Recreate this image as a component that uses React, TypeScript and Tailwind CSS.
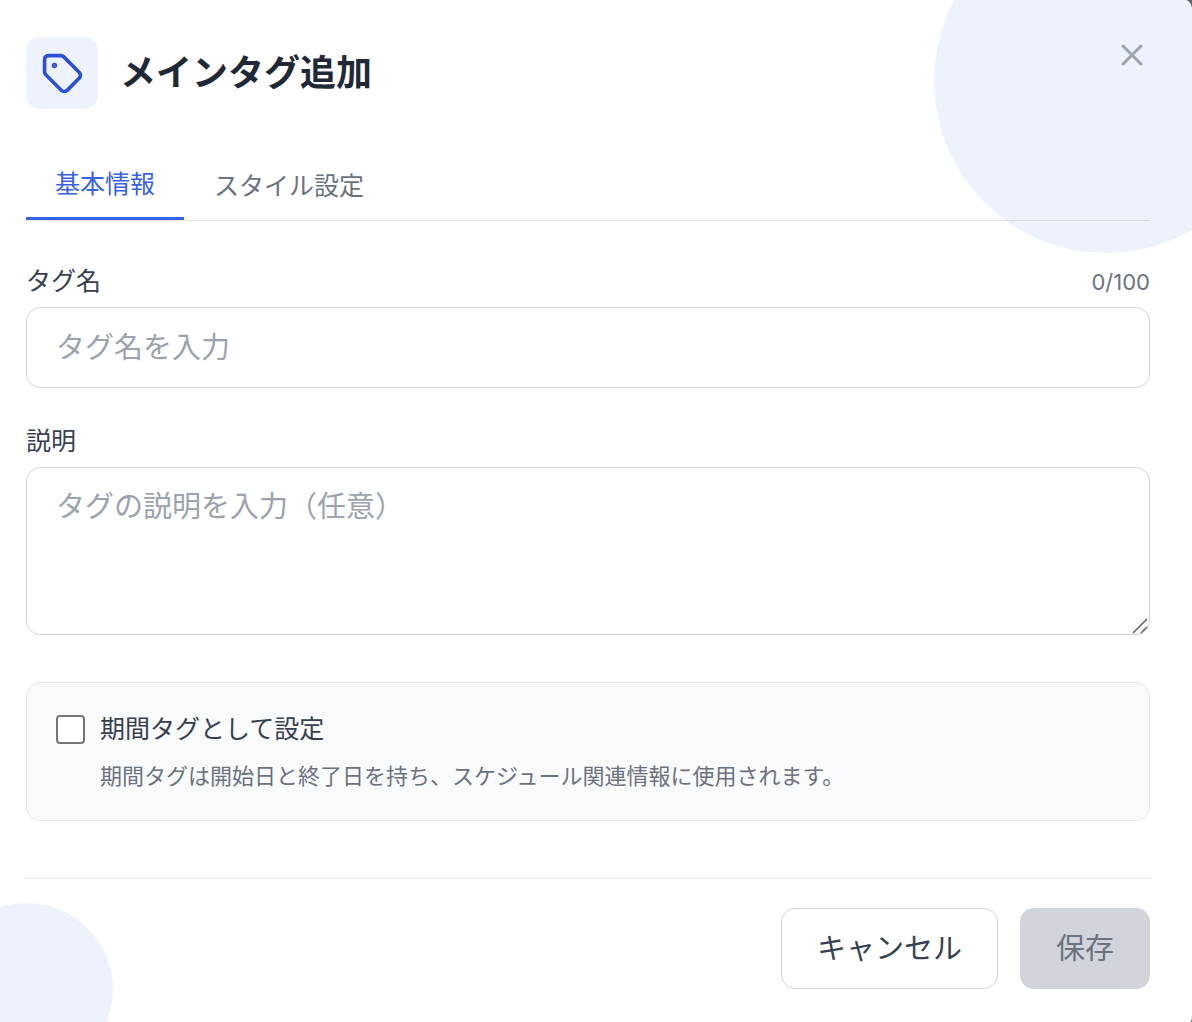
import { Tag, X } from 'lucide-react';
import { useState } from 'react';

export default function App() {
  const [name, setName] = useState('');
  const [description, setDescription] = useState('');

  return (
    <div className="min-h-screen bg-[#666666] font-['Inter','Noto_Sans_CJK_JP',sans-serif]">
      <div
        role="dialog"
        aria-labelledby="dialog-title"
        className="relative min-h-screen overflow-hidden bg-white pt-[37px] pr-[42px] pb-[33px] pl-[26px] [border-top-right-radius:7px_10px] [border-bottom-right-radius:2px_6px]"
      >
        <div className="absolute -top-[91px] -right-[86px] size-[344px] rounded-full bg-[#edf2fd]" />
        <div className="absolute -bottom-[54px] -left-[60px] size-[173px] rounded-full bg-[#edf2fd]" />

        <div className="relative">
          <header className="flex items-start justify-between">
            <div className="flex items-center gap-[22px]">
              <div className="flex size-[72px] items-center justify-center rounded-[14px] bg-[#edf2fd] text-[#2a50d8]">
                <Tag size={43} strokeWidth={2} />
              </div>
              <h1 id="dialog-title" className="text-[36px] leading-[52px] font-bold text-[#1f2937]">
                メインタグ追加
              </h1>
            </div>
            <button type="button" aria-label="閉じる" className="text-[#9ca3af]">
              <X size={36} strokeWidth={2} />
            </button>
          </header>

          <div role="tablist" className="mt-10 flex h-[72px] border-b border-black/10 text-[25px]">
            <button
              type="button"
              role="tab"
              aria-selected="true"
              className="border-b-3 border-[#3662e3] px-[29px] pt-1 text-[#3662e3]"
            >
              基本情報
            </button>
            <button type="button" role="tab" aria-selected="false" className="px-[30px] pt-1 text-[#6b7280]">
              スタイル設定
            </button>
          </div>

          <div className="mt-[42px]">
            <div className="mb-1.5 flex h-[38px] items-center justify-between">
              <label htmlFor="tag-name" className="text-[25px] text-[#374151]">
                タグ名
              </label>
              <span className="text-[22px] text-[#6b7280]">{name.length}/100</span>
            </div>
            <input
              id="tag-name"
              value={name}
              maxLength={100}
              onChange={(e) => setName(e.target.value)}
              placeholder="タグ名を入力"
              className="block h-[81px] w-full rounded-[14px] border border-[#d1d5db] bg-white px-[29px] text-[29px] text-[#1f2937] placeholder:text-[#9ca3af]"
            />
          </div>

          <div className="mt-[35px]">
            <label htmlFor="tag-description" className="mb-1.5 flex h-[38px] items-center text-[25px] text-[#374151]">
              説明
            </label>
            <div className="relative">
              <textarea
                id="tag-description"
                value={description}
                onChange={(e) => setDescription(e.target.value)}
                placeholder="タグの説明を入力（任意）"
                className="block h-[168px] w-full resize-y rounded-[14px] border border-[#d1d5db] bg-white px-[29px] py-[17px] text-[29px] leading-[43px] text-[#1f2937] placeholder:text-[#9ca3af] [&::-webkit-resizer]:bg-transparent"
              />
              <svg
                aria-hidden="true"
                viewBox="0 0 18 18"
                className="pointer-events-none absolute right-0 bottom-0 size-[18px] stroke-[#666666]"
                strokeWidth="1.6"
              >
                <path d="M1 16 15 2M9 16l6-6" />
              </svg>
            </div>
          </div>

          <div className="mt-[47px] rounded-[14px] border border-[#e5e7eb] bg-[#f9fafb] px-[29px] pt-7 pb-[26px]">
            <div className="flex items-center gap-[15px]">
              <input
                id="period"
                type="checkbox"
                className="size-[29px] appearance-none rounded-sm border-2 border-[#767676] bg-white checked:bg-[#3662e3]"
              />
              <label htmlFor="period" className="text-[25px] leading-9 text-[#374151]">
                期間タグとして設定
              </label>
            </div>
            <p className="mt-[11px] ml-11 text-[22px] leading-9 text-[#6b7280]">
              期間タグは開始日と終了日を持ち、スケジュール関連情報に使用されます。
            </p>
          </div>

          <footer className="mt-[57px] flex justify-end gap-[22px] border-t border-[#e5e7eb] pt-[29px] text-[29px]">
            <button
              type="button"
              className="h-[81px] rounded-[14px] border border-[#d1d5db] bg-white px-[35px] text-[#374151]"
            >
              キャンセル
            </button>
            <button type="submit" disabled className="h-[81px] rounded-[14px] bg-[#d1d5db] px-9 text-[#6b7280]">
              保存
            </button>
          </footer>
        </div>
      </div>
    </div>
  );
}
